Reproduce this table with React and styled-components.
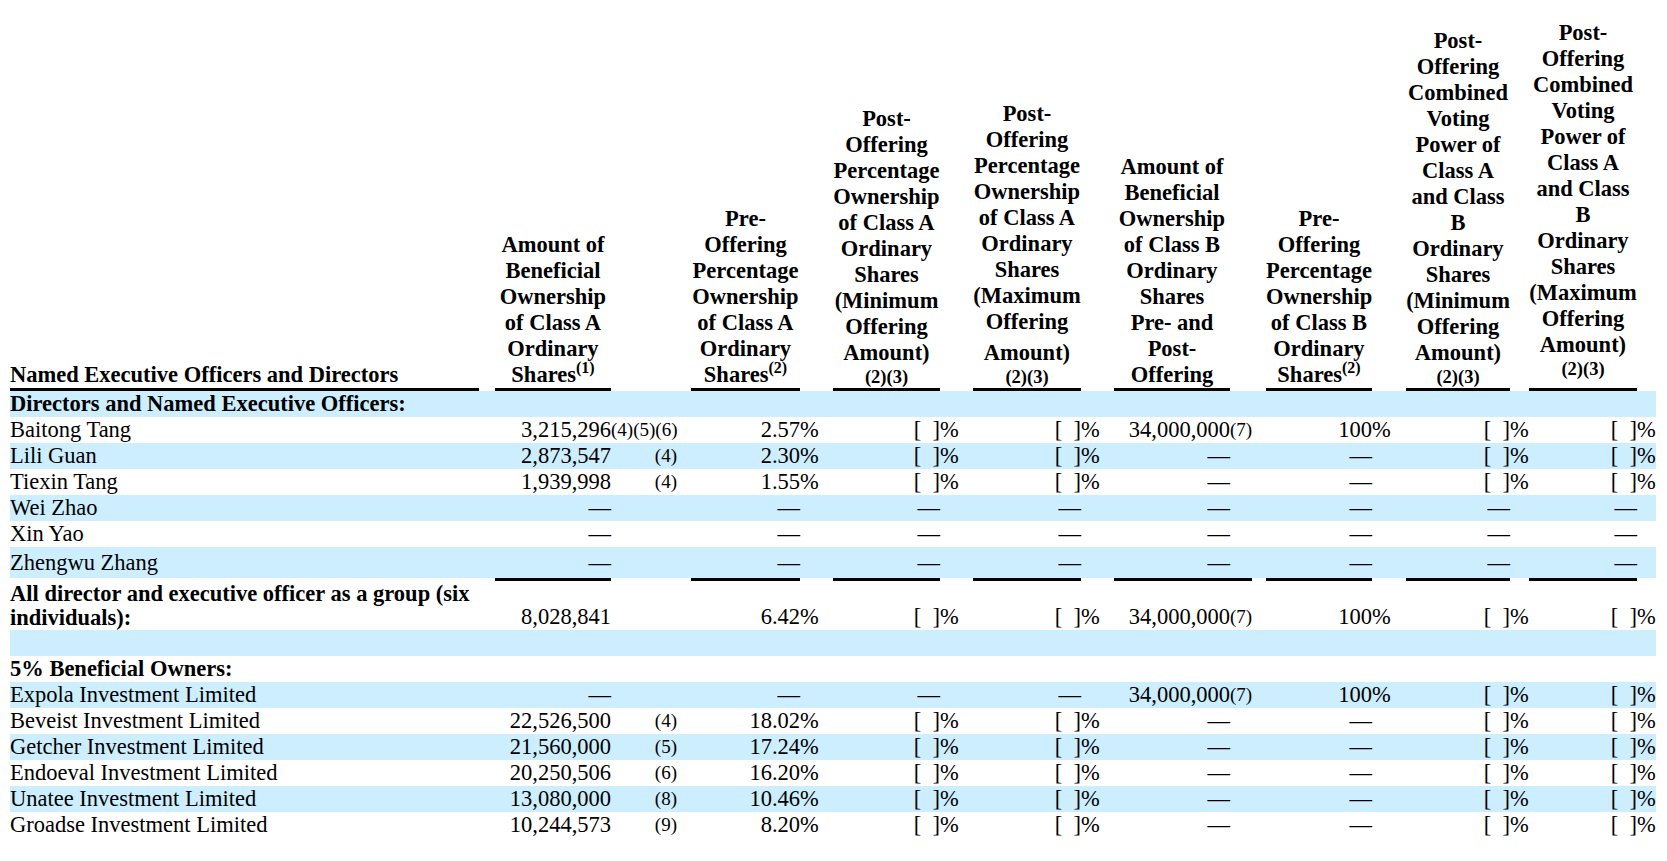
import React from 'react';
import styled, { createGlobalStyle } from 'styled-components';

const GlobalStyle = createGlobalStyle`
  html, body {
    margin: 0;
    background: #fff;
  }
  body {
    font-family: "Liberation Serif", "Times New Roman", serif;
    color: #000;
  }
`;

const Page = styled.div`
  padding: 20px 0 0 10px;
`;

const Table = styled.table`
  width: 1646px;
  table-layout: fixed;
  border-collapse: separate;
  border-spacing: 0;
  font-size: 22.5px;
  line-height: 26px;
`;

const Col = styled.col`
  width: ${p => p.$w}px;
`;

const Row = styled.tr`
  height: ${p => p.$h || 26}px;
  background: ${p => (p.$shade ? '#cceeff' : '#fff')};
`;

const Th = styled.th`
  padding: 0 0 ${p => p.$lift || 0}px;
  vertical-align: bottom;
  text-align: ${p => p.$align || 'center'};
  font-weight: bold;
  white-space: nowrap;
  border-bottom: ${p => (p.$rule ? '3px solid #000' : 'none')};
`;

const Line = styled.span`
  display: block;
  margin-top: ${p => p.$gap || 0}px;
`;

const Sup = styled.span`
  position: relative;
  top: -9px;
  font-size: 16px;
  line-height: 0;
`;

const NoteLine = styled.span`
  display: block;
  font-size: 18.5px;
  line-height: 22px;
`;

const Td = styled.td`
  padding: 0 ${p => p.$padRight || 0}px 0 0;
  vertical-align: ${p => p.$valign || 'bottom'};
  text-align: ${p => p.$align || 'right'};
  font-weight: ${p => (p.$bold ? 'bold' : 'normal')};
  font-size: ${p => (p.$note ? '19px' : 'inherit')};
  line-height: ${p => p.$lh || 26}px;
  white-space: nowrap;
  border-top: ${p => (p.$rule ? '3px solid #000' : 'none')};
`;

// value width, suffix width (suffix holds "%" or footnote marks)
const columns = [
  { val: 116, suf: 80, sufRight: true, sufPad: 14 },
  { val: 109, suf: 33 },
  { val: 107, suf: 33 },
  { val: 108, suf: 33 },
  { val: 116, suf: 22, spacer: 14, sufRule: true },
  { val: 106, suf: 34 },
  { val: 104, suf: 19 },
  { val: 108, suf: 19, lift: 8 },
];

const NAME_W = 469;
const NAME_GAP = 16;
const TOTAL_COLS = 2 + columns.reduce((n, c) => n + (c.spacer ? 3 : 2), 0);

const headings = [
  { lines: ['Amount of', 'Beneficial', 'Ownership', 'of Class A', 'Ordinary', 'Shares'], sup: '(1)' },
  { lines: ['Pre-', 'Offering', 'Percentage', 'Ownership', 'of Class A', 'Ordinary', 'Shares'], sup: '(2)' },
  { lines: ['Post-', 'Offering', 'Percentage', 'Ownership', 'of Class A', 'Ordinary', 'Shares', '(Minimum', 'Offering', 'Amount)'], note: '(2)(3)' },
  { lines: ['Post-', 'Offering', 'Percentage', 'Ownership', 'of Class A', 'Ordinary', 'Shares', '(Maximum', 'Offering', 'Amount)'], note: '(2)(3)', gapAt: 9 },
  { lines: ['Amount of', 'Beneficial', 'Ownership', 'of Class B', 'Ordinary', 'Shares', 'Pre- and', 'Post-', 'Offering'] },
  { lines: ['Pre-', 'Offering', 'Percentage', 'Ownership', 'of Class B', 'Ordinary', 'Shares'], sup: '(2)' },
  { lines: ['Post-', 'Offering', 'Combined', 'Voting', 'Power of', 'Class A', 'and Class', 'B', 'Ordinary', 'Shares', '(Minimum', 'Offering', 'Amount)'], note: '(2)(3)' },
  { lines: ['Post-', 'Offering', 'Combined', 'Voting', 'Power of', 'Class A', 'and Class', 'B', 'Ordinary', 'Shares', '(Maximum', 'Offering', 'Amount)'], note: '(2)(3)' },
];

const OPEN = ['[\u00a0\u00a0]', '%'];
const DASH = ['—', ''];
const allDash = Array(8).fill(DASH);

const rows = [
  { type: 'section', label: 'Directors and Named Executive Officers:' },
  { name: 'Baitong Tang', cells: [['3,215,296', '(4)(5)(6)'], ['2.57', '%'], OPEN, OPEN, ['34,000,000', '(7)'], ['100', '%'], OPEN, OPEN] },
  { name: 'Lili Guan', cells: [['2,873,547', '(4)'], ['2.30', '%'], OPEN, OPEN, DASH, DASH, OPEN, OPEN] },
  { name: 'Tiexin Tang', cells: [['1,939,998', '(4)'], ['1.55', '%'], OPEN, OPEN, DASH, DASH, OPEN, OPEN] },
  { name: 'Wei Zhao', cells: allDash },
  { name: 'Xin Yao', cells: allDash },
  { name: 'Zhengwu Zhang', cells: allDash, height: 31, valign: 'middle' },
  {
    name: ['All director and executive officer as a group (six', 'individuals):'],
    bold: true,
    total: true,
    height: 52,
    cells: [['8,028,841', ''], ['6.42', '%'], OPEN, OPEN, ['34,000,000', '(7)'], ['100', '%'], OPEN, OPEN],
  },
  { type: 'blank' },
  { type: 'section', label: '5% Beneficial Owners:' },
  { name: 'Expola Investment Limited', cells: [DASH, DASH, DASH, DASH, ['34,000,000', '(7)'], ['100', '%'], OPEN, OPEN] },
  { name: 'Beveist Investment Limited', cells: [['22,526,500', '(4)'], ['18.02', '%'], OPEN, OPEN, DASH, DASH, OPEN, OPEN] },
  { name: 'Getcher Investment Limited', cells: [['21,560,000', '(5)'], ['17.24', '%'], OPEN, OPEN, DASH, DASH, OPEN, OPEN] },
  { name: 'Endoeval Investment Limited', cells: [['20,250,506', '(6)'], ['16.20', '%'], OPEN, OPEN, DASH, DASH, OPEN, OPEN] },
  { name: 'Unatee Investment Limited', cells: [['13,080,000', '(8)'], ['10.46', '%'], OPEN, OPEN, DASH, DASH, OPEN, OPEN] },
  { name: 'Groadse Investment Limited', cells: [['10,244,573', '(9)'], ['8.20', '%'], OPEN, OPEN, DASH, DASH, OPEN, OPEN] },
];

const Heading = ({ h }) => (
  <>
    {h.lines.map((l, i) => (
      <Line key={i} $gap={h.gapAt === i ? 5 : 0}>
        {l}
        {i === h.lines.length - 1 && h.sup ? <Sup>{h.sup}</Sup> : null}
      </Line>
    ))}
    {h.note && <NoteLine>{h.note}</NoteLine>}
  </>
);

const HeaderRow = () => (
  <Row>
    <Th $align="left" $rule>Named Executive Officers and Directors</Th>
    <Th />
    {columns.map((c, i) => (
      <React.Fragment key={i}>
        <Th $rule $lift={c.lift}>
          <Heading h={headings[i]} />
        </Th>
        <Th />
        {c.spacer && <Th />}
      </React.Fragment>
    ))}
  </Row>
);

const DataRow = ({ row, shade }) => {
  const lh = row.total ? 24 : 26;
  return (
    <Row $shade={shade} $h={row.height}>
      <Td $align="left" $bold={row.bold} $lh={lh} $valign={row.valign}>
        {Array.isArray(row.name) ? row.name.map((n, i) => <Line key={i}>{n}</Line>) : row.name}
      </Td>
      <Td />
      {columns.map((c, i) => {
        const [v, s] = row.cells[i];
        const note = s.startsWith('(');
        return (
          <React.Fragment key={i}>
            <Td $rule={row.total} $valign={row.valign}>{v}</Td>
            <Td
              $align={c.sufRight ? 'right' : 'left'}
              $padRight={c.sufRight ? c.sufPad : 0}
              $note={note}
              $rule={row.total && c.sufRule}
              $valign={row.valign}
            >
              {s}
            </Td>
            {c.spacer && <Td />}
          </React.Fragment>
        );
      })}
    </Row>
  );
};

const App = () => (
  <Page>
    <GlobalStyle />
    <Table>
      <colgroup>
        <Col $w={NAME_W} />
        <Col $w={NAME_GAP} />
        {columns.map((c, i) => (
          <React.Fragment key={i}>
            <Col $w={c.val} />
            <Col $w={c.suf} />
            {c.spacer && <Col $w={c.spacer} />}
          </React.Fragment>
        ))}
      </colgroup>
      <thead>
        <HeaderRow />
      </thead>
      <tbody>
        {rows.map((row, i) => {
          const shade = i % 2 === 0;
          if (row.type === 'section') {
            return (
              <Row key={i} $shade={shade}>
                <Td $align="left" $bold>{row.label}</Td>
                <Td colSpan={TOTAL_COLS - 1} />
              </Row>
            );
          }
          if (row.type === 'blank') {
            return (
              <Row key={i} $shade={shade}>
                <Td colSpan={TOTAL_COLS} />
              </Row>
            );
          }
          return <DataRow key={i} row={row} shade={shade} />;
        })}
      </tbody>
    </Table>
  </Page>
);

export default App;
